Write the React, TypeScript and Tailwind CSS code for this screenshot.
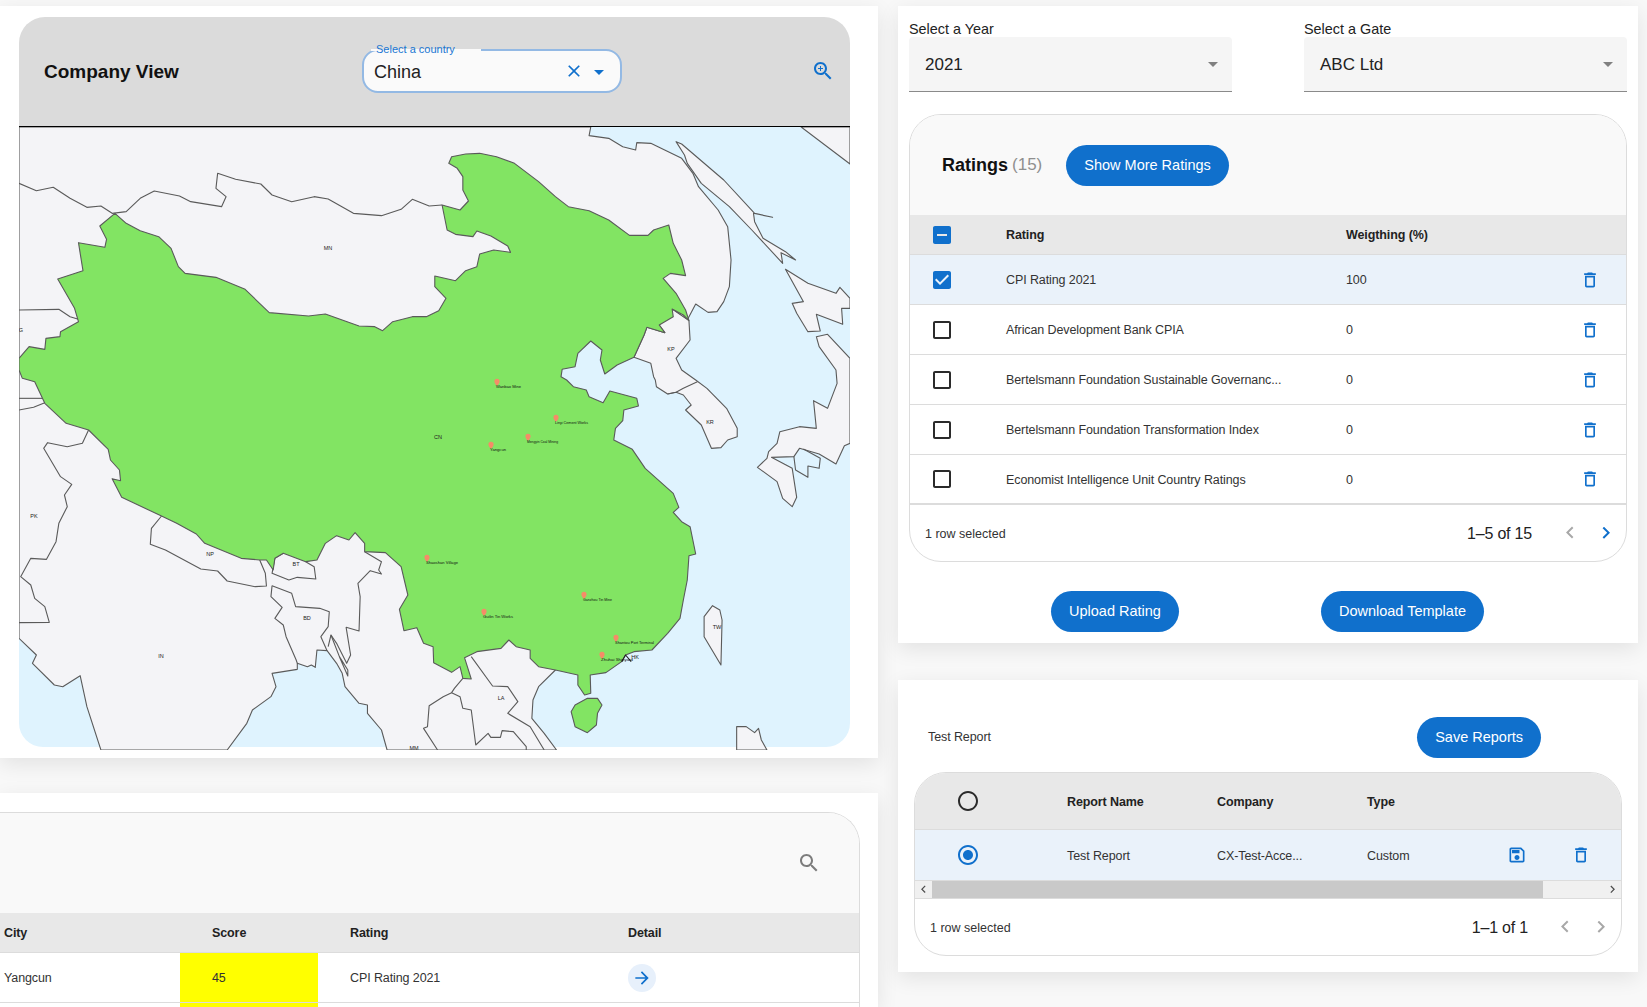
import React from 'react';

const BLUE = '#1070cc';

const ICONS = {
  zoomIn: 'M15.5 14h-.79l-.28-.27C15.41 12.59 16 11.11 16 9.5 16 5.91 13.09 3 9.5 3S3 5.91 3 9.5 5.91 16 9.5 16c1.61 0 3.09-.59 4.23-1.57l.27.28v.79l5 4.99L20.49 19l-4.99-5zm-6 0C7.01 14 5 11.99 5 9.5S7.01 5 9.5 5 14 7.01 14 9.5 11.99 14 9.5 14zM12 10h-2v2H9v-2H7V9h2V7h1v2h2v1z',
  clear: 'M19 6.41L17.59 5 12 10.59 6.41 5 5 6.41 10.59 12 5 17.59 6.41 19 12 13.41 17.59 19 19 17.59 13.41 12z',
  caret: 'M7 10l5 5 5-5z',
  trash: 'M6 19c0 1.1.9 2 2 2h8c1.1 0 2-.9 2-2V7H6v12zM8 9h8v10H8V9zm7.5-5l-1-1h-5l-1 1H5v2h14V4z',
  save: 'M17 3H5c-1.11 0-2 .9-2 2v14c0 1.1.89 2 2 2h14c1.1 0 2-.9 2-2V7l-4-4zm2 16H5V5h11.17L19 7.83V19zm-7-7c-1.66 0-3 1.34-3 3s1.34 3 3 3 3-1.34 3-3-1.34-3-3-3zM6 6h9v4H6z',
  checked: 'M19 3H5c-1.11 0-2 .9-2 2v14c0 1.1.89 2 2 2h14c1.11 0 2-.9 2-2V5c0-1.1-.89-2-2-2zm-9 14l-5-5 1.41-1.41L10 14.17l7.59-7.59L19 8l-9 9z',
  partial: 'M19 3H5c-1.1 0-2 .9-2 2v14c0 1.1.9 2 2 2h14c1.1 0 2-.9 2-2V5c0-1.1-.9-2-2-2zm-2 10H7v-2h10v2z',
  blank: 'M19 5v14H5V5h14m0-2H5c-1.1 0-2 .9-2 2v14c0 1.1.9 2 2 2h14c1.1 0 2-.9 2-2V5c0-1.1-.9-2-2-2z',
  radio: 'M12 2C6.48 2 2 6.48 2 12s4.48 10 10 10 10-4.48 10-10S17.52 2 12 2zm0 18c-4.42 0-8-3.58-8-8s3.58-8 8-8 8 3.58 8 8-3.58 8-8 8z',
  radioOn: 'M12 7c-2.76 0-5 2.24-5 5s2.24 5 5 5 5-2.24 5-5-2.24-5-5-5zm0-5C6.48 2 2 6.48 2 12s4.48 10 10 10 10-4.48 10-10S17.52 2 12 2zm0 18c-4.42 0-8-3.58-8-8s3.58-8 8-8 8 3.58 8 8-3.58 8-8 8z',
  left: 'M15.41 16.09l-4.58-4.59 4.58-4.59L14 5.5l-6 6 6 6z',
  right: 'M8.59 16.34l4.58-4.59-4.58-4.59L10 5.75l6 6-6 6z',
  arrow: 'M12 4l-1.41 1.41L16.17 11H4v2h12.17l-5.58 5.59L12 20l8-8z',
  search: 'M15.5 14h-.79l-.28-.27C15.41 12.59 16 11.11 16 9.5 16 5.91 13.09 3 9.5 3S3 5.91 3 9.5 5.91 16 9.5 16c1.61 0 3.09-.59 4.23-1.57l.27.28v.79l5 4.99L20.49 19l-4.99-5zm-6 0C7.01 14 5 11.99 5 9.5S7.01 5 9.5 5 14 7.01 14 9.5 11.99 14 9.5 14z',
};

const Icon = ({ name, size = 24, color = BLUE }: { name: keyof typeof ICONS; size?: number; color?: string }) => (
  <svg width={size} height={size} viewBox="0 0 24 24" fill={color} className="block shrink-0">
    <path d={ICONS[name]} />
  </svg>
);

// map shapes, traced in a stretched coordinate space (see the inner viewBox)
const RUSSIA = '34,381 1053,381 1050,407 1085,415 1110,440 1133,450 1135,428 1160,430 1215,475 1235,520 1245,560 1280,630 1297,680 1303,780 1300,860 1290,905 1278,935 1262,937 1240,912 1225,960 1198,927 1000,1000 100,1100 34,1100';
const SOUTH = '34,1100 100,1150 900,1500 990,2010 960,2060 950,2100 948,2155 970,2200 992,2250 690,2250 680,2190 655,2140 655,2115 640,2110 615,2060 610,2020 600,1990 583,1952 565,1950 562,2002 555,1995 548,2000 530,1990 530,2008 485,2020 492,2060 483,2090 450,2130 440,2170 405,2250 180,2250 155,2120 143,2027 112,2060 97,2055 58,1990 65,1965 34,1915';
const KOREA = '1130,1072 1148,1005 1153,982 1185,998 1175,975 1198,927 1228,962 1230,1020 1205,1075 1215,1110 1240,1140 1260,1165 1295,1225 1314,1285 1314,1310 1297,1320 1285,1343 1268,1345 1250,1275 1222,1230 1232,1215 1218,1185 1205,1177 1190,1182 1170,1160 1168,1140 1165,1130 1160,1090';
const CHINA = '800,490 805,470 830,462 855,460 885,470 917,490 960,545 990,590 1013,620 1050,632 1085,660 1122,706 1155,706 1165,690 1192,675 1200,730 1215,780 1222,827 1195,820 1182,835 1205,880 1222,930 1228,962 1218,945 1198,927 1200,950 1175,975 1185,998 1153,982 1148,1005 1130,1072 1100,1095 1078,1122 1070,1080 1073,1050 1053,1023 1030,1060 1025,1100 1002,1108 1000,1130 1010,1140 1022,1160 1045,1170 1050,1190 1075,1208 1087,1173 1135,1195 1138,1218 1112,1230 1110,1262 1097,1285 1094,1320 1127,1348 1150,1405 1200,1480 1210,1522 1200,1537 1215,1565 1230,1580 1240,1662 1228,1667 1225,1740 1218,1800 1212,1855 1190,1900 1162,1950 1130,1955 1115,1965 1108,1985 1080,2018 1052,2025 1053,2080 1042,2085 1030,2055 1030,2025 990,2010 960,2000 945,1975 945,1950 920,1940 907,1920 893,1945 850,1955 828,1973 840,2037 825,2035 820,2000 805,2017 773,1988 772,1940 755,1930 743,1883 720,1892 712,1828 727,1785 715,1700 687,1658 650,1655 650,1630 633,1598 622,1620 600,1607 580,1630 565,1680 545,1685 505,1660 490,1675 487,1710 475,1680 463,1680 430,1675 365,1630 350,1602 315,1570 288,1548 217,1492 200,1436 215,1442 213,1410 197,1380 193,1348 158,1290 118,1270 80,1210 62,1145 40,1135 34,1110 34,1075 52,1040 80,1048 82,1015 107,1010 108,995 140,965 133,925 103,837 148,812 140,728 187,742 190,718 178,678 205,640 225,670 250,692 283,710 305,745 318,800 330,820 385,832 437,868 480,938 550,948 580,942 640,978 668,980 682,992 700,965 735,950 760,950 782,932 795,895 775,860 775,828 812,842 830,812 850,800 855,762 880,750 910,757 905,738 875,708 850,693 843,710 812,703 797,690 788,615 820,630 835,603 825,570 825,530 815,505';
const ISLANDS = [
  '1205,425 1215,432 1290,540 1345,640 1377,652 1343,640 1345,665 1360,715 1400,755 1418,780 1392,758 1395,790 1340,690 1300,620 1250,550 1225,490 1220,465',
  '1428,381 1515,381 1515,492',
  '1400,808 1440,850 1490,880 1497,862 1515,895 1515,925 1500,925 1502,973 1455,943 1462,993 1440,995 1420,940 1412,910 1432,905',
  '1455,1010 1475,1003 1515,1075 1515,1330 1505,1337 1490,1392 1460,1362 1425,1345 1415,1370 1375,1372 1412,1405 1420,1492 1412,1520 1395,1495 1385,1445 1350,1402 1367,1375 1370,1355 1385,1330 1390,1295 1425,1280 1455,1285 1450,1202 1475,1225 1492,1150 1490,1110 1460,1040',
  '1313,2250 1313,2180 1330,2180 1345,2198 1352,2185 1357,2220 1367,2250',
  '1270,1817 1255,1850 1255,1910 1285,1995 1287,1860 1283,1830',
];
const HAINAN = '1047,2095 1025,2115 1018,2135 1025,2180 1047,2198 1063,2175 1065,2140 1073,2115 1065,2095';
const BORDERS = [
  '34,550 65,572 95,562 125,595 155,622 180,618 200,640 225,635 250,595 275,573 320,588 340,605 395,620 403,590 385,565 388,520 420,538 465,552 485,585 520,605 560,590 585,597 630,640 680,647 715,628 735,598 765,618 788,615',
  '34,930 105,928 125,950 140,958',
  '34,1195 80,1195',
  '34,1230 60,1222 80,1208',
  '1190,1182 1205,1177 1218,1165 1243,1145',
  '1415,1370 1418,1410 1440,1432 1440,1398 1460,1405 1462,1375 1432,1347',
  '288,1548 270,1585 268,1633 295,1650 358,1707 388,1713 405,1743 455,1760 475,1758 473,1720 463,1680',
  '505,1660 490,1675 485,1720 515,1740 530,1732 563,1737 560,1700 545,1685',
  '158,1290 147,1330 120,1340 85,1328 78,1345 108,1430 128,1453 115,1485 120,1520 105,1570 100,1625 83,1678 55,1675 37,1730 55,1755 62,1795 80,1820 88,1867 34,1868',
  '485,1757 483,1790 503,1822 490,1855 505,1875 510,1910 528,1980 530,1990',
  '485,1757 520,1780 527,1820 570,1825 587,1835 585,1880 572,1910 583,1952',
  '650,1655 680,1685 675,1710 680,1722 660,1712 638,1750 642,1790 640,1893 617,1882 625,1965 618,1990 600,1930 590,1905 585,1940',
  '590,1905 605,1970 620,2010 620,2028 605,1970',
  '825,2035 810,2065 805,2078 790,2090 765,2117 762,2180 755,2185 780,2250',
  '805,2078 820,2090 825,2125 840,2130 848,2235 870,2200 875,2212 892,2212 895,2192 915,2195 938,2240 938,2250',
  '840,1970 878,2058 905,2060 923,2105 905,2140 945,2180 970,2250',
];

const COUNTRY_LABELS: [string, number, number][] = [
  ['MN', 328, 250], ['G', 21, 332], ['KP', 671, 351], ['KR', 710, 424], ['CN', 438, 439], ['PK', 34, 518],
  ['NP', 210, 556], ['BT', 296, 566], ['BD', 307, 620], ['IN', 161, 658], ['LA', 501, 700], ['TW', 717, 629],
  ['HK', 635, 659], ['MM', 414, 750],
];

const PINS: [string, number, number, number][] = [
  ['Wanbao Mine', 497, 382, 25],
  ['Linyi Cement Works', 556, 418, 33],
  ['Mengyin Coal Mining', 528, 437, 31],
  ['Yangcun', 491, 445, 16],
  ['Shaoshan Village', 427, 558, 32],
  ['Ganzhou Tin Mine', 584, 595, 29],
  ['Guilin Tin Works', 484, 612, 30],
  ['Shantou Port Terminal', 616, 638, 39],
  ['Zhuhai Shipyard', 602, 655, 32],
];

const ChinaMap = () => (
  <svg width={831} height={623} viewBox="19 127 831 623" className="block">
    <svg x={19} y={127} width={831} height={623} viewBox="34 381 1481 1869" preserveAspectRatio="none">
      <g stroke="#5a5a5a" strokeWidth={1.1} strokeLinejoin="round">
        <polygon points={RUSSIA} fill="#f4f4f7" vectorEffect="non-scaling-stroke" />
        <polygon points={SOUTH} fill="#f4f4f7" vectorEffect="non-scaling-stroke" />
        <polygon points={KOREA} fill="#f4f4f7" vectorEffect="non-scaling-stroke" />
        {ISLANDS.map((p) => (
          <polygon key={p} points={p} fill="#f4f4f7" vectorEffect="non-scaling-stroke" />
        ))}
        {BORDERS.map((p) => (
          <polyline key={p} points={p} fill="none" vectorEffect="non-scaling-stroke" />
        ))}
        <polygon points={CHINA} fill="#82e463" vectorEffect="non-scaling-stroke" />
        <polygon points={HAINAN} fill="#82e463" vectorEffect="non-scaling-stroke" />
        <polyline points="1108,1985 1115,1965 1125,1985" fill="none" stroke="#222" vectorEffect="non-scaling-stroke" />
      </g>
    </svg>
    {COUNTRY_LABELS.map(([t, x, y]) => (
      <text key={t} x={x} y={y} fontSize={5.5} textAnchor="middle" fill="#222">{t}</text>
    ))}
    {PINS.map(([name, x, y, w]) => (
      <g key={name}>
        <path d={`M${x} ${y + 4}c-1.4-2-2.6-3-2.6-4.6a2.6 2.6 0 0 1 5.2 0c0 1.6-1.2 2.6-2.6 4.6z`} fill="#f58c68" />
        <text x={x - 1} y={y + 6.4} fontSize={3} fill="#111" textLength={w} lengthAdjust="spacingAndGlyphs">{name}</text>
      </g>
    ))}
  </svg>
);

const CountrySelect = () => (
  <div className="relative flex h-[44px] w-[260px] items-center rounded-[16px] border-2 border-[#93b9e4] bg-[#fafafa] pl-[10px] pr-[9px]">
    <span className="absolute left-[7px] top-[-2px] h-[2px] w-[110px] bg-[#fafafa]" />
    <span className="absolute left-[12px] top-[-9px] text-[11px] leading-[14px] text-[#1976d2]">Select a country</span>
    <span className="flex-1 pt-[3px] text-[18px] text-[#222]">China</span>
    <span className="pt-[1px]"><Icon name="clear" size={20} /></span>
    <span className="ml-[3px] pt-[3px]"><Icon name="caret" size={24} /></span>
  </div>
);

const FilterSelect = ({ label, value }: { label: string; value: string }) => (
  <div className="w-[323px]">
    <div className="h-[16px] text-[14.4px] leading-[16px] text-[#222]">{label}</div>
    <div className="flex h-[55px] items-center justify-between rounded-t-[4px] border-b border-[#8a8a8a] bg-[#f5f5f5] pl-[16px] pr-[7px] text-[17px] text-[#222]">
      <span className="pt-[1px]">{value}</span>
      <Icon name="caret" size={24} color="#808080" />
    </div>
  </div>
);

const PillButton = ({ children }: { children: React.ReactNode }) => (
  <button className="h-[41px] rounded-[21px] bg-[#1070cc] px-[18px] pt-[1px] text-[14.5px] text-white">{children}</button>
);

const RATINGS = [
  { name: 'CPI Rating 2021', weight: '100', selected: true },
  { name: 'African Development Bank CPIA', weight: '0', selected: false },
  { name: 'Bertelsmann Foundation Sustainable Governanc...', weight: '0', selected: false },
  { name: 'Bertelsmann Foundation Transformation Index', weight: '0', selected: false },
  { name: 'Economist Intelligence Unit Country Ratings', weight: '0', selected: false },
];

const RatingsTable = () => (
  <div className="overflow-hidden rounded-[32px] border border-[#dcdcdc] bg-white">
    <div className="flex h-[100px] items-center bg-[#f9f9f9] pl-[32px]">
      <span className="text-[18px] font-bold text-[#111]">Ratings</span>
      <span className="ml-[4px] text-[17px] text-[#8f8f8f]">(15)</span>
      <span className="ml-[24px] flex"><PillButton>Show More Ratings</PillButton></span>
    </div>
    <div className="grid h-[40px] grid-cols-[96px_340px_1fr] items-center border-b border-[#dcdcdc] bg-[#e8e8e8] text-[12.5px] font-bold tracking-[-0.1px] text-[#222]">
      <span className="pl-[20px]"><Icon name="partial" /></span>
      <span className="pt-[2px]">Rating</span>
      <span className="pt-[2px]">Weigthing (%)</span>
    </div>
    {RATINGS.map((row, i) => (
      <div
        key={row.name}
        className={`grid h-[50px] grid-cols-[96px_340px_1fr_46px] items-center text-[12.5px] tracking-[-0.1px] text-[#333] ${i === 4 ? 'border-b-2' : 'border-b'} border-[#dcdcdc] ${row.selected ? 'bg-[#eaf2fa]' : 'bg-white'}`}
      >
        <span className="pl-[20px]">
          <Icon name={row.selected ? 'checked' : 'blank'} color={row.selected ? BLUE : '#2b2b2b'} />
        </span>
        <span className="pt-[2px]">{row.name}</span>
        <span className="pt-[2px]">{row.weight}</span>
        <Icon name="trash" size={20} />
      </div>
    ))}
    <div className="flex h-[56px] items-center pl-[15px] pr-[8px] text-[#222]">
      <span className="flex-1 pt-[2px] text-[12.5px] text-[#333]">1 row selected</span>
      <span className="pt-[2px] text-[16px] tracking-[-0.2px]">1–5 of 15</span>
      <span className="ml-[26px]"><Icon name="left" size={24} color="#a8a8a8" /></span>
      <span className="ml-[12px]"><Icon name="right" size={24} /></span>
    </div>
  </div>
);

const ReportsTable = () => (
  <div className="overflow-hidden rounded-[32px] border border-[#dcdcdc] bg-white">
    <div className="grid h-[57px] grid-cols-[152px_150px_150px_1fr] items-center border-b border-[#dcdcdc] bg-[#e8e8e8] text-[12.5px] font-bold tracking-[-0.1px] text-[#222]">
      <span className="pl-[41px]"><Icon name="radio" color="#2b2b2b" /></span>
      <span className="pt-[2px]">Report Name</span>
      <span className="pt-[2px]">Company</span>
      <span className="pt-[2px]">Type</span>
    </div>
    <div className="grid h-[51px] grid-cols-[152px_150px_150px_140px_64px_1fr] items-center border-b border-[#dcdcdc] bg-[#eaf2fa] text-[12.5px] tracking-[-0.1px] text-[#333]">
      <span className="pl-[41px]"><Icon name="radioOn" /></span>
      <span className="pt-[2px]">Test Report</span>
      <span className="pt-[2px]">CX-Test-Acce...</span>
      <span className="pt-[2px]">Custom</span>
      <Icon name="save" size={20} />
      <Icon name="trash" size={20} />
    </div>
    <div className="flex h-[18px] items-center border-b border-[#dcdcdc] bg-[#f0f0f0]">
      <span className="flex w-[17px] justify-center"><Icon name="left" size={15} color="#505050" /></span>
      <span className="h-full w-[611px] bg-[#c9c9c9]" />
      <span className="ml-auto mr-[1px]"><Icon name="right" size={15} color="#505050" /></span>
    </div>
    <div className="flex h-[56px] items-center pl-[15px] pr-[8px] text-[#222]">
      <span className="flex-1 pt-[2px] text-[12.5px] text-[#333]">1 row selected</span>
      <span className="pt-[2px] text-[16px] tracking-[-0.2px]">1–1 of 1</span>
      <span className="ml-[25px]"><Icon name="left" size={24} color="#a8a8a8" /></span>
      <span className="ml-[12px]"><Icon name="right" size={24} color="#a8a8a8" /></span>
    </div>
  </div>
);

const CitiesTable = () => (
  <div className="w-[860px] overflow-hidden rounded-tr-[32px] border-r border-t border-[#dcdcdc] bg-white">
    <div className="flex h-[100px] items-center justify-end bg-[#f9f9f9] pr-[38px]">
      <Icon name="search" size={24} color="#7d7d7d" />
    </div>
    <div className="grid h-[40px] grid-cols-[212px_138px_278px_1fr] items-center border-b border-[#dcdcdc] bg-[#e8e8e8] pt-[2px] text-[12.5px] font-bold tracking-[-0.1px] text-[#222]">
      <span className="pl-[4px]">City</span>
      <span>Score</span>
      <span>Rating</span>
      <span>Detail</span>
    </div>
    <div className="grid h-[50px] grid-cols-[180px_138px_310px_1fr] items-stretch border-b border-[#dcdcdc] text-[12.5px] tracking-[-0.1px] text-[#333]">
      <span className="flex items-center pl-[4px] pt-[2px]">Yangcun</span>
      <span className="flex items-center bg-[#ffff00] pl-[32px] pt-[2px]">45</span>
      <span className="flex items-center pl-[32px] pt-[2px]">CPI Rating 2021</span>
      <span className="flex items-center">
        <span className="flex h-[28px] w-[28px] items-center justify-center rounded-full bg-[#e7f0fb]">
          <Icon name="arrow" size={20} />
        </span>
      </span>
    </div>
    <div className="ml-[180px] h-[50px] w-[138px] bg-[#ffff00]" />
  </div>
);

const CARD = 'bg-white shadow-[0_6px_20px_rgba(0,0,0,0.09)]';

export default function App() {
  return (
    <div className="flex h-[1007px] w-[1647px] gap-[20px] overflow-hidden bg-[#f8f8f8] pt-[6px] font-['Liberation_Sans',Arial,sans-serif]">
      <div className="flex w-[878px] shrink-0 flex-col gap-[35px]">
        <div className={`${CARD} h-[752px] shrink-0 pl-[19px] pt-[11px]`}>
          <div className="w-[831px]">
            <div className="flex h-[110px] items-center rounded-t-[26px] border-b border-black bg-[#dbdbdb] pb-[2px] pl-[25px] pr-[15px]">
              <span className="w-[318px] pt-[3px] text-[19px] font-bold text-[#111]">Company View</span>
              <CountrySelect />
              <span className="ml-auto"><Icon name="zoomIn" size={24} /></span>
            </div>
            <div className="h-[620px] rounded-b-[24px] bg-[#dff3fe]">
              <ChinaMap />
            </div>
          </div>
        </div>
        <div className={`${CARD} min-h-0 flex-1 overflow-hidden pt-[19px]`}>
          <CitiesTable />
        </div>
      </div>

      <div className="flex w-[740px] shrink-0 flex-col gap-[37px]">
        <div className={`${CARD} h-[637px] shrink-0 px-[11px] pt-[15px]`}>
          <div className="flex justify-between">
            <FilterSelect label="Select a Year" value="2021" />
            <FilterSelect label="Select a Gate" value="ABC Ltd" />
          </div>
          <div className="mt-[22px]">
            <RatingsTable />
          </div>
          <div className="mt-[29px] flex pl-[142px]">
            <PillButton>Upload Rating</PillButton>
            <span className="ml-[142px] flex"><PillButton>Download Template</PillButton></span>
          </div>
        </div>
        <div className={`${CARD} h-[292px] shrink-0 pl-[16px] pr-[16px] pt-[37px]`}>
          <div className="flex items-center justify-between pl-[14px] pr-[81px]">
            <span className="text-[12.5px] tracking-[-0.1px] text-[#333]">Test Report</span>
            <PillButton>Save Reports</PillButton>
          </div>
          <div className="mt-[14px]">
            <ReportsTable />
          </div>
        </div>
      </div>
    </div>
  );
}
